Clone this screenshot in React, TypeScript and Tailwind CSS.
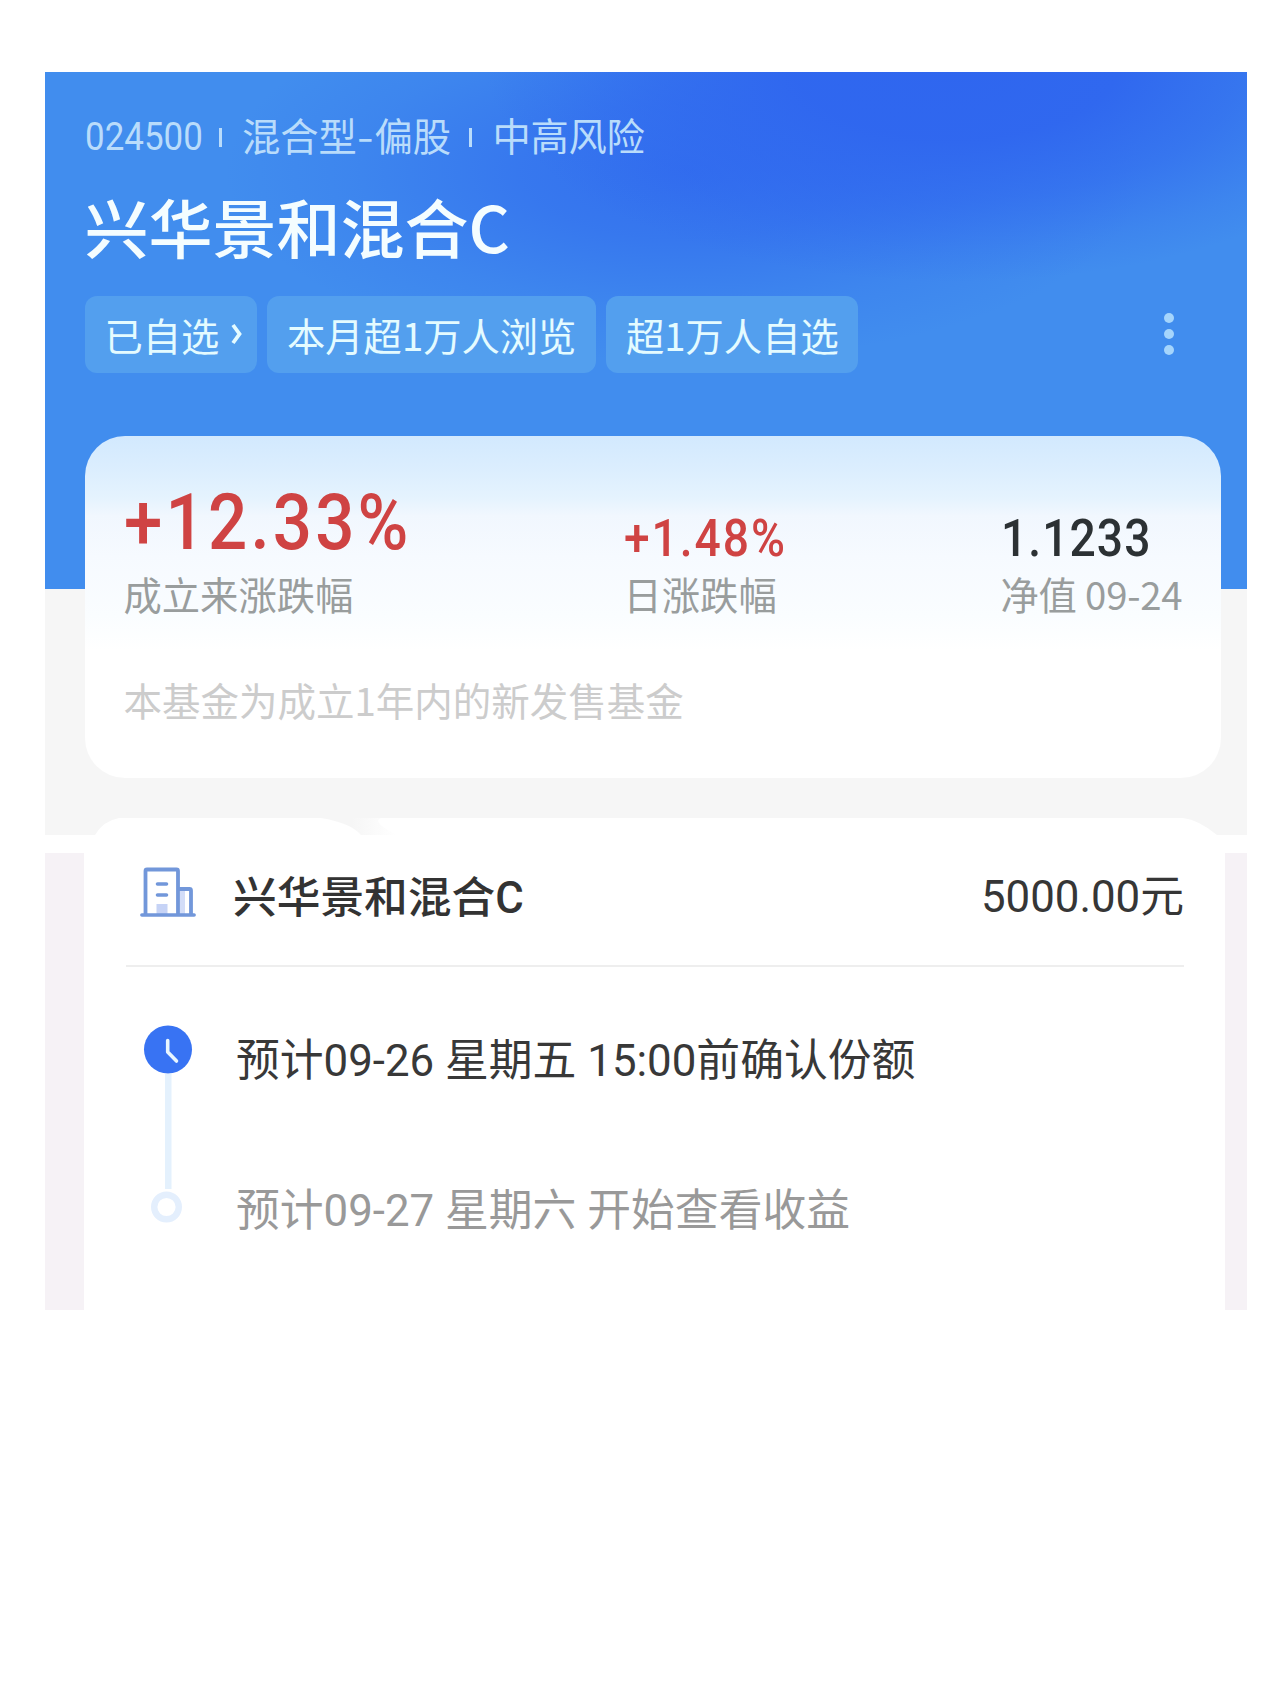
const chips = [
  { label: "已自选", width: "w-[172.5px]", arrow: true },
  { label: "本月超1万人浏览", width: "w-[329px]", arrow: false },
  { label: "超1万人自选", width: "w-[252px]", arrow: false },
];

function Separator() {
  return <span className="relative top-[2.5px] h-[19px] w-[3px] bg-[#b9dcfb]" />;
}

function BuildingIcon() {
  return (
    <svg width="56" height="52" viewBox="0 0 56 52" fill="none">
      <rect x="16.5" y="37" width="11" height="10" fill="#c6d3f6" />
      <rect x="40" y="22" width="5" height="25" fill="#d3ddf8" />
      <path d="M5.500 47.500V4a1.500 1.500 0 0 1 1.500-1.500H36.500A1.500 1.500 0 0 1 38 4V47.500M38 22H49.500A1.500 1.500 0 0 1 51 23.500V47.500" stroke="#7297da" strokeWidth="3.800" />
      <path d="M1.900 48H54.100M17.500 17H26.500M17.500 28H26.500" stroke="#7297da" strokeWidth="3.600" strokeLinecap="round" />
    </svg>
  );
}

function Timeline() {
  return (
    <svg width="50" height="200" viewBox="0 0 50 200" fill="none">
      <rect x="22" y="49" width="6.500" height="115" fill="#e4f1fd" />
      <circle cx="25" cy="24.500" r="24" fill="#3873f3" />
      <path d="M24.700 15.500V27L33.500 36" stroke="#e8f6ff" strokeWidth="3.600" strokeLinecap="round" strokeLinejoin="round" />
      <circle cx="23.500" cy="182" r="12.300" stroke="#e4effd" strokeWidth="6.400" fill="#fff" />
    </svg>
  );
}

function FundHeader() {
  return (
    <header className="h-[364px] pl-[39.500px] pt-[41px]">
      <div className="flex h-[44px] items-center text-[38.3px] leading-[44px] text-[#b9dcfb]">
        <span className="w-[134.500px] pt-[3px] font-['Roboto'] text-[38px]">
          <span className="inline-block origin-left scale-x-[0.92]">024500</span>
        </span>
        <Separator />
        <span className="ml-[20px] w-[226.500px] whitespace-nowrap">
          混合型<span className="inline-block w-[17.500px] origin-left scale-x-[1.25]">-</span>偏股
        </span>
        <Separator />
        <span className="ml-[21px] tracking-[-0.300px]">中高风险</span>
      </div>
      <h1 className="mt-[30px] h-[76px] text-[64px] font-medium leading-[76px] text-[#f4fdff]">兴华景和混合C</h1>
      <div className="mt-[32.500px] flex h-[77px] items-center">
        <div className="flex gap-[10px]">
          {chips.map((chip) => (
            <div key={chip.label} className={`${chip.width} flex h-[77px] items-center gap-[12px] whitespace-nowrap rounded-[12px] bg-[#539fee] pl-[20px] text-[38.3px] leading-[75px] text-[#e4fbff]`}>
              {chip.label}
              {chip.arrow && (
                <svg width="12" height="22" viewBox="0 0 12 22" fill="none">
                  <path d="M2 2L8.500 11L2 20" stroke="#e4fbff" strokeWidth="3.800" />
                </svg>
              )}
            </div>
          ))}
        </div>
        <div className="ml-auto mr-[73px] flex flex-col gap-[6px]">
          <span className="size-[10px] rounded-full bg-[#a5d5fc]" />
          <span className="size-[10px] rounded-full bg-[#a5d5fc]" />
          <span className="size-[10px] rounded-full bg-[#a5d5fc]" />
        </div>
      </div>
    </header>
  );
}

function StatsCard() {
  return (
    <section className="ml-[39.500px] h-[342px] w-[1136px] rounded-[40px] bg-[linear-gradient(to_bottom,#d2e9fe_0px,#dceefe_35px,#e5f3fe_62px,#f1f7fe_80px,#f6faff_120px,#fafdff_180px,#ffffff_215px)] pl-[39px] pt-[44px]">
      <div className="flex h-[138px]">
        <div className="w-[500px]">
          <div className="h-[90px] font-['Roboto'] text-[78.500px] font-medium leading-[84px] text-[#cf4343]">
            <span className="inline-block origin-left scale-x-[0.88] tracking-[3.600px]">+12.33%</span>
          </div>
          <div className="h-[46px] text-[38.3px] leading-[47px] text-[#999d9d]">成立来涨跌幅</div>
        </div>
        <div className="w-[377px] pt-[29px]">
          <div className="h-[61px] font-['Roboto'] text-[52.500px] font-medium leading-[58px] text-[#cf4343]">
            <span className="inline-block origin-left scale-x-[0.88] tracking-[2.200px]">+1.48%</span>
          </div>
          <div className="h-[46px] text-[38.3px] leading-[47px] text-[#999d9d]">日涨跌幅</div>
        </div>
        <div className="whitespace-nowrap pt-[29px]">
          <div className="h-[61px] w-[150px] font-['Roboto'] text-[52.500px] font-medium leading-[58px] text-[#2c3134]">
            <span className="inline-block origin-left scale-x-[0.88] tracking-[1.200px]">1.1233</span>
          </div>
          <div className="h-[46px] text-[38.3px] leading-[47px] tracking-[-0.200px] text-[#999d9d]">净值 09-24</div>
        </div>
      </div>
      <p className="mt-[58px] text-[38.500px] leading-[46px] text-[#cccccc]">本基金为成立1年内的新发售基金</p>
    </section>
  );
}

function OrderCard() {
  return (
    <section className="h-[457px] w-[1141px] bg-white pl-[42px]">
      <div className="flex h-[114px] w-[1058px] items-center border-b-2 border-[#eeeeee] pl-[14px]">
        <div className="mb-[32px]">
          <BuildingIcon />
        </div>
        <h2 className="mb-[22px] ml-[37px] font-['Roboto','Noto_Sans_CJK_SC',sans-serif] text-[43.7px] font-medium leading-[56px] text-[#333]">兴华景和混合C</h2>
        <span className="mb-[25px] ml-auto font-['Roboto','Noto_Sans_CJK_SC',sans-serif] text-[43.8px] leading-[56px] text-[#363636]">5000.00元</span>
      </div>
      <div className="flex pl-[17px] pt-[58px]">
        <Timeline />
        <div className="ml-[43px] whitespace-nowrap font-['Roboto','Noto_Sans_CJK_SC',sans-serif] text-[43.8px]">
          <p className="mt-[8px] leading-[56px] text-[#383838]">预计09-26 星期五 15:00前确认份额</p>
          <p className="mt-[94px] leading-[56px] text-[#999]">预计09-27 星期六 开始查看收益</p>
        </div>
      </div>
    </section>
  );
}

export default function App() {
  return (
    <main className="min-h-[1687px] bg-white pl-[45px] pt-[72px] font-['Noto_Sans_CJK_SC',sans-serif]">
      <div className="w-[1202px]">
        <div className="h-[763px] bg-[#f6f6f6]">
          <div className="h-[517px] bg-[#418dee] bg-[radial-gradient(ellipse_470px_220px_at_910px_-10px,#2f66ef_0%,rgba(47,102,239,0.95)_35%,rgba(47,102,239,0.6)_62%,rgba(47,102,239,0.2)_85%,rgba(47,102,239,0)_100%),radial-gradient(ellipse_460px_190px_at_640px_100px,rgba(47,104,238,0.8)_0%,rgba(47,104,238,0.58)_35%,rgba(47,104,238,0.2)_72%,rgba(47,104,238,0)_100%)]">
            <FundHeader />
            <StatsCard />
          </div>
          <svg className="mt-[229px]" width="1202" height="17" viewBox="0 0 1202 17">
            <defs>
              <linearGradient id="notch" x1="0" x2="1" y1="0" y2="0">
                <stop offset="0.4" stopColor="#f6f6f6" />
                <stop offset="1" stopColor="#f6f6f6" stopOpacity="0" />
              </linearGradient>
            </defs>
            <path d="M50 17Q58 3 74 0H1138Q1154 2 1172 17Z" fill="#fff" />
            <path d="M276 0H336Q326 4 352 17H316Q306 5 276 0Z" fill="url(#notch)" />
          </svg>
        </div>
        <div className="h-[18px]" />
        <div className="flex bg-[#f6f2f6]">
          <div className="w-[39px]" />
          <OrderCard />
        </div>
      </div>
    </main>
  );
}
